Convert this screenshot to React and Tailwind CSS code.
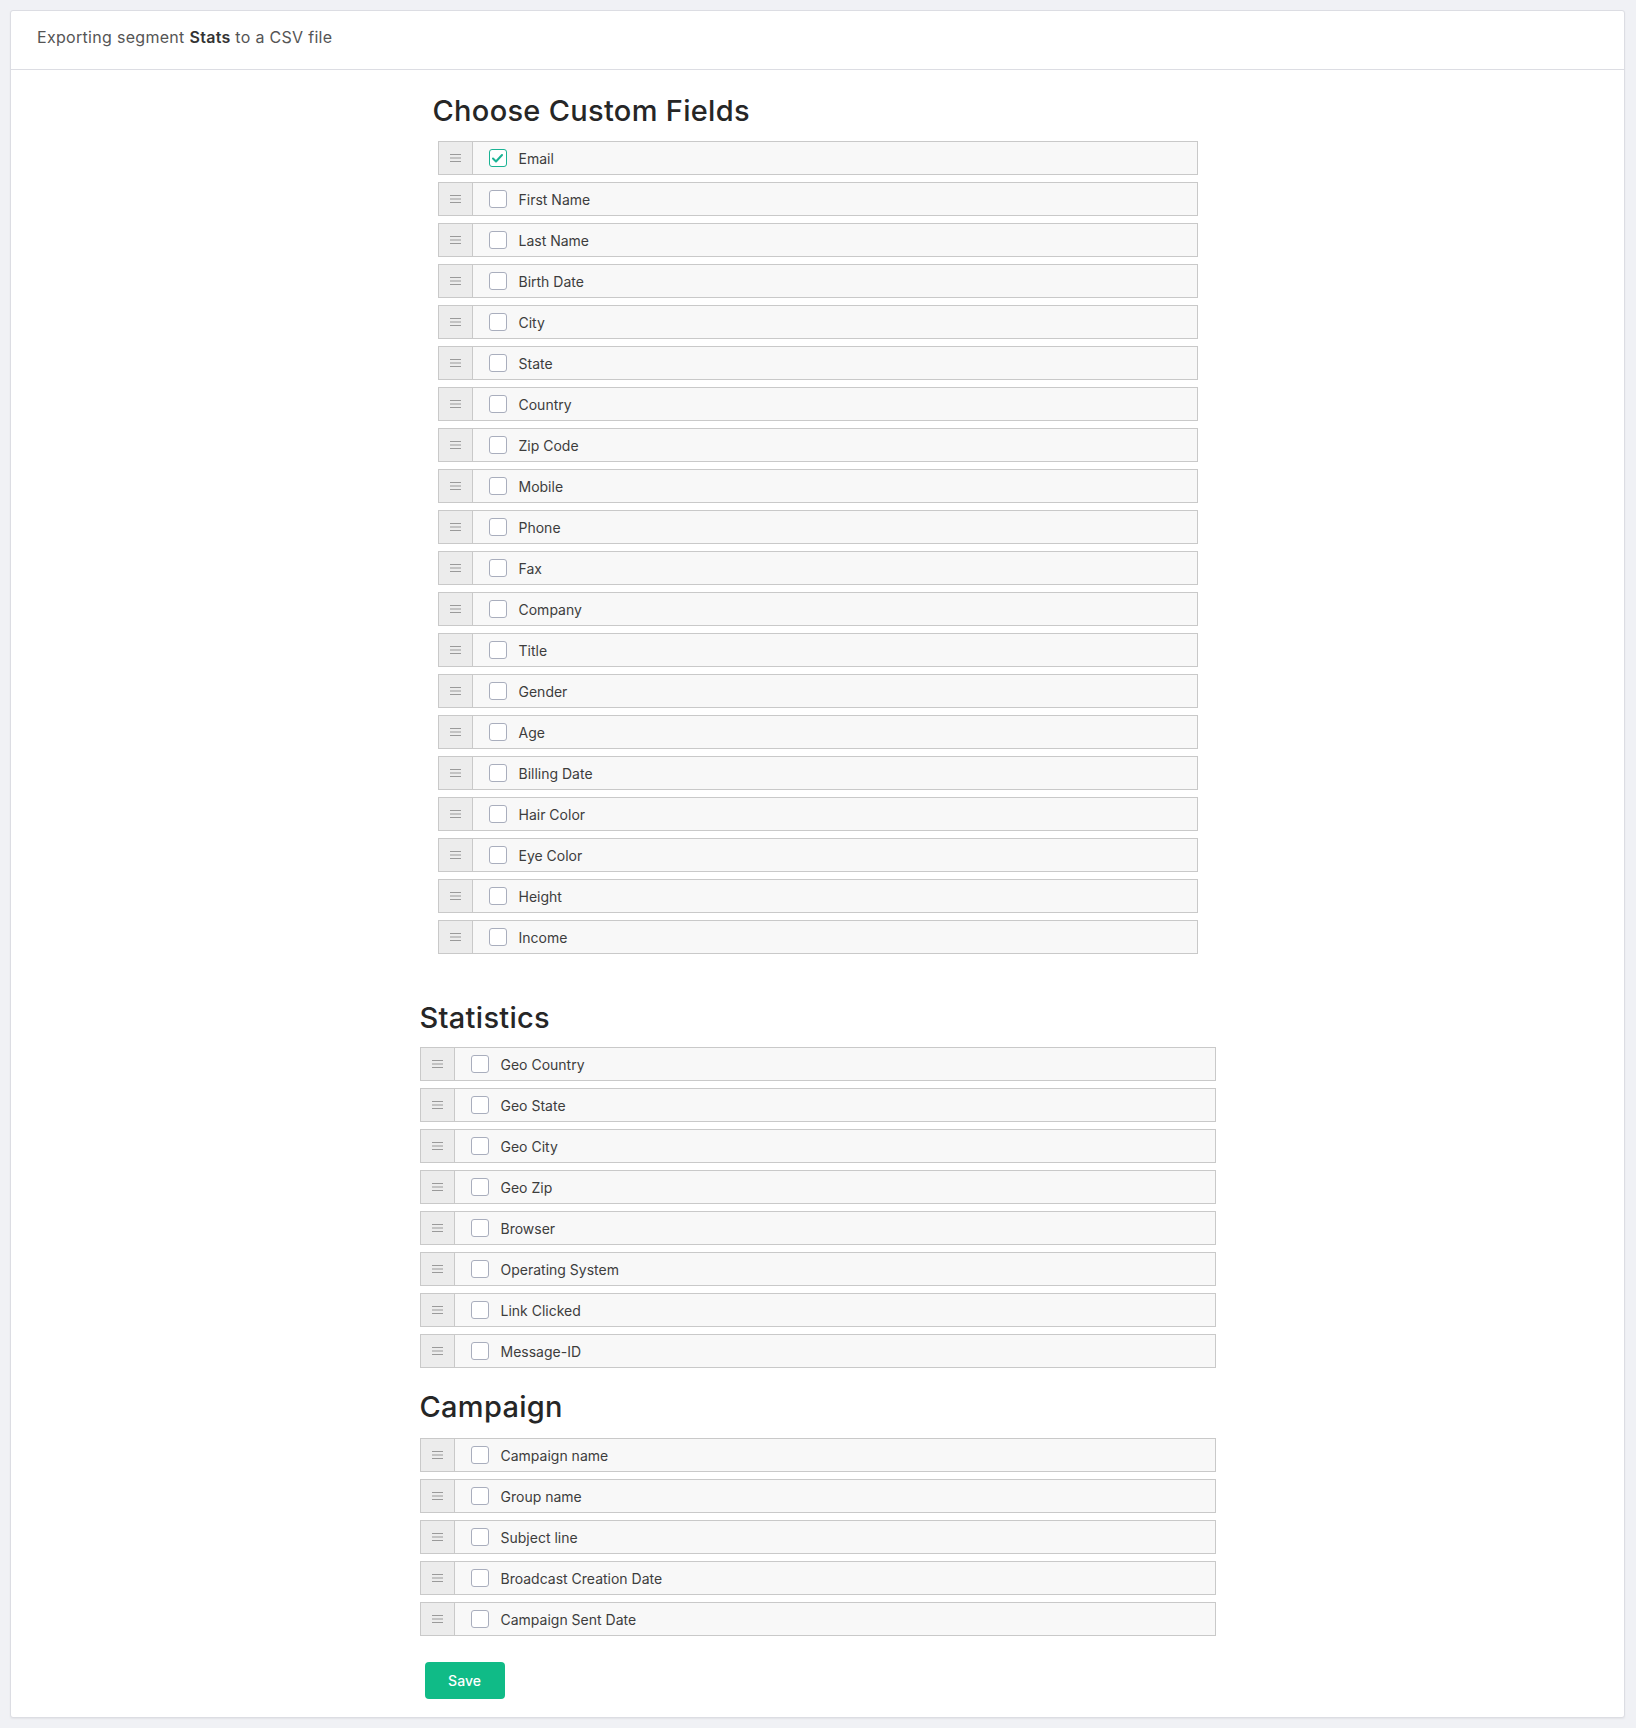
import React, { useState } from 'react'

const customFields = [
    'Email', 'First Name', 'Last Name', 'Birth Date', 'City', 'State', 'Country', 'Zip Code',
    'Mobile', 'Phone', 'Fax', 'Company', 'Title', 'Gender', 'Age', 'Billing Date',
    'Hair Color', 'Eye Color', 'Height', 'Income',
]
const statFields = [
    'Geo Country', 'Geo State', 'Geo City', 'Geo Zip', 'Browser', 'Operating System', 'Link Clicked', 'Message-ID',
]
const campaignFields = [
    'Campaign name', 'Group name', 'Subject line', 'Broadcast Creation Date', 'Campaign Sent Date',
]

const Handle = () => (
    <div className="w-[34px] shrink-0 h-full bg-[#ececec] border-r border-[#c9c9c9] flex items-center justify-center">
        <svg width="11" height="8" viewBox="0 0 11 8">
            <path d="M0 0.5h11M0 4h11M0 7.5h11" stroke="#9a9a9a" strokeWidth="1" />
        </svg>
    </div>
)

const FieldRow = ({ label, checked, onToggle }) => (
    <div className="flex items-center h-[34px] bg-[#f8f8f8] border border-[#c9c9c9]">
        <Handle />
        <button
            type="button"
            onClick={onToggle}
            className={`ml-[16px] w-[18px] h-[18px] rounded-[3px] border flex items-center justify-center bg-white ${checked ? 'border-[#1ab394]' : 'border-[#a9aebd]'}`}
        >
            {checked && (
                <svg width="11" height="9" viewBox="0 0 11 9">
                    <path d="M1 4.5l3 3L10 1" fill="none" stroke="#1ab394" strokeWidth="2" strokeLinecap="round" strokeLinejoin="round" />
                </svg>
            )}
        </button>
        <span className="ml-[12px] text-[14px] text-[#3d3d3d]">{label}</span>
    </div>
)

const Section = ({ title, fields, checked, toggle, className, rowClass }) => (
    <div className={className}>
        <h2 className="text-[29px] leading-[36px] font-medium text-[#262626] tracking-[0.3px]">{title}</h2>
        <div className={`flex flex-col gap-[7px] ${rowClass}`}>
            {fields.map((f) => (
                <FieldRow key={f} label={f} checked={!!checked[f]} onToggle={() => toggle(f)} />
            ))}
        </div>
    </div>
)

const App = () => {
    const [checked, setChecked] = useState({ Email: true })
    const toggle = (f) => setChecked((c) => ({ ...c, [f]: !c[f] }))

    return (
        <div className="min-h-screen bg-[#f0f1f5] pt-[10px] pl-[10px] pr-[11px] pb-[11px] font-['Inter',sans-serif]">
            <div className="bg-white border border-[#dcdde3] rounded-[3px] shadow-[0_1px_2px_rgba(0,0,0,0.06)]">
                <div className="h-[59px] flex items-center pb-[6px] px-[26px] border-b border-[#dcdde3] text-[16px] tracking-[0.3px] text-[#555]">
                    <span>Exporting segment <b className="font-semibold text-[#333]">Stats</b> to a CSV file</span>
                </div>

                <div className="pt-[23px] pb-[18px]">
                    <Section
                        title="Choose Custom Fields"
                        fields={customFields}
                        checked={checked}
                        toggle={toggle}
                        className="w-[770px] mx-auto"
                        rowClass="mt-[12px] px-[5px]"
                    />

                    <div className="w-[796px] mx-auto mt-[46px]">
                        <Section
                            title="Statistics"
                            fields={statFields}
                            checked={checked}
                            toggle={toggle}
                            rowClass="mt-[11px]"
                        />
                        <Section
                            title="Campaign"
                            fields={campaignFields}
                            checked={checked}
                            toggle={toggle}
                            className="mt-[21px]"
                            rowClass="mt-[13px]"
                        />
                        <button
                            type="submit"
                            className="mt-[26px] ml-[5px] w-[80px] h-[37px] rounded-[4px] bg-[#10bb87] text-white text-[14px] font-medium"
                        >
                            Save
                        </button>
                    </div>
                </div>
            </div>
        </div>
    )
}

export default App
